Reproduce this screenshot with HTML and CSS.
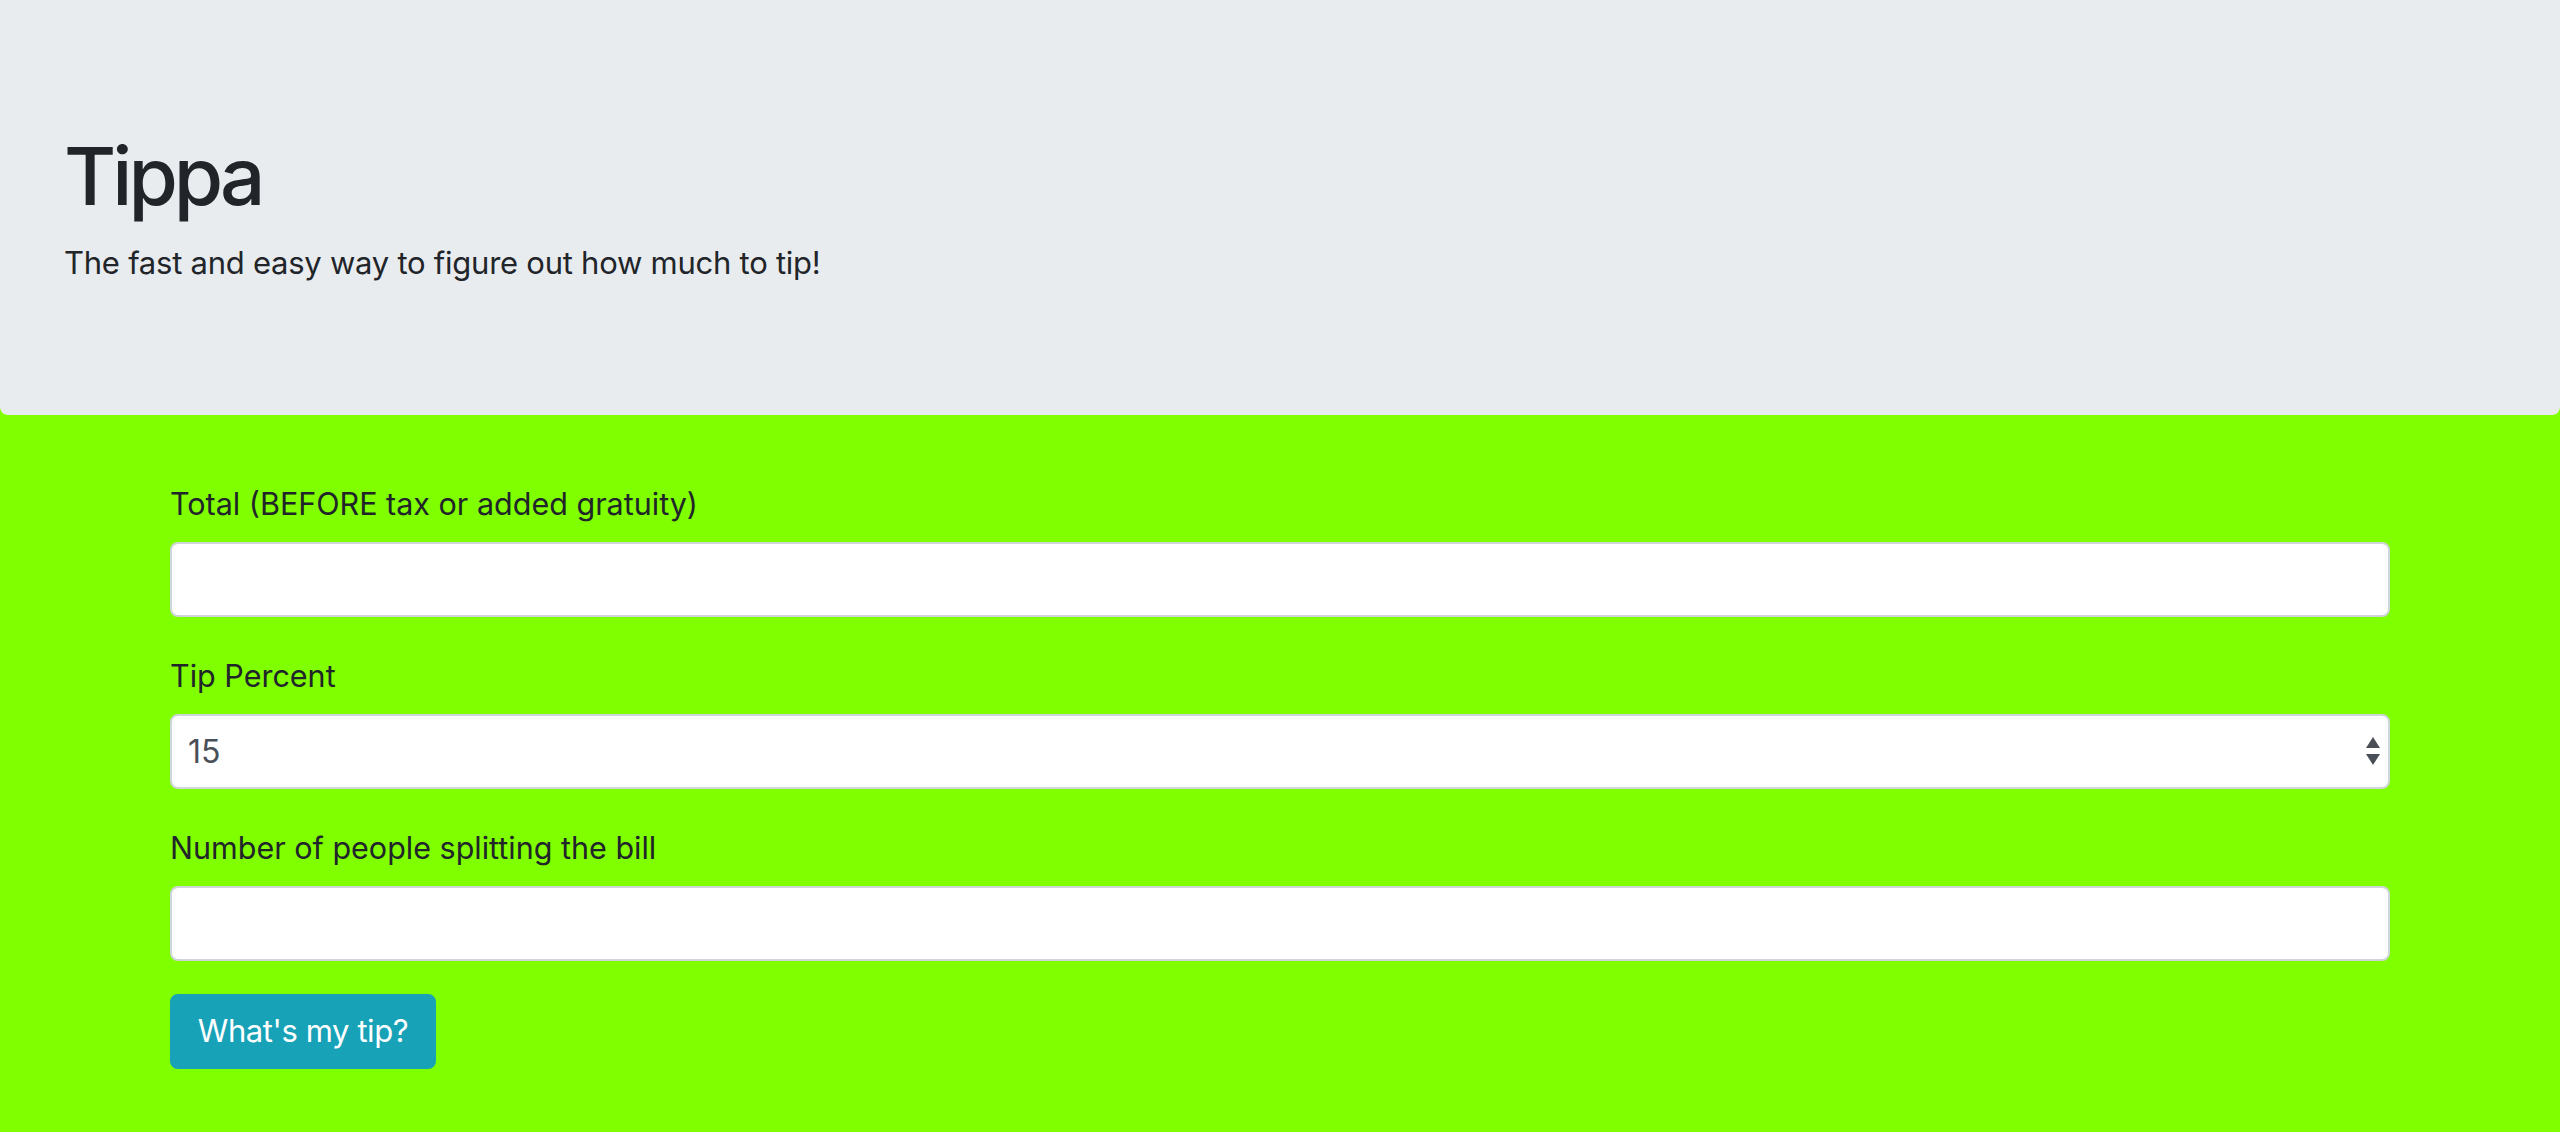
FILE: index.html
```html
<!DOCTYPE html>
<html lang="en">
<head>
<meta charset="utf-8">
<title>Tippa</title>
<link rel="stylesheet" href="styles.css">
</head>
<body>
<header class="jumbotron">
  <h1 class="title">Tippa</h1>
  <p class="lead">The fast and easy way to figure out how much to tip!</p>
</header>
<main class="container">
  <form class="tip-form">
    <div class="form-group">
      <label class="label" for="total">Total (BEFORE tax or added gratuity)</label>
      <input class="control" id="total" type="text">
    </div>
    <div class="form-group">
      <label class="label" for="percent">Tip Percent</label>
      <div class="select-wrap">
        <select class="control select" id="percent">
          <option>15</option>
          <option>18</option>
          <option>20</option>
          <option>25</option>
        </select>
        <svg class="select-arrows" width="14" height="29" viewBox="0 0 14 29" aria-hidden="true">
          <polygon points="7,0 14,11 0,11" fill="#4a4f57"/>
          <polygon points="0,17 14,17 7,28" fill="#4a4f57"/>
        </svg>
      </div>
    </div>
    <div class="form-group last">
      <label class="label" for="people">Number of people splitting the bill</label>
      <input class="control" id="people" type="text">
    </div>
    <button class="btn" type="button">What's my tip?</button>
  </form>
</main>
</body>
</html>
```
FILE: styles.css
```css
* { box-sizing: border-box; }

html, body {
  margin: 0;
  padding: 0;
}

body {
  background: #7fff00;
  font-family: Inter, "Liberation Sans", sans-serif;
  color: #212529;
}

.jumbotron {
  background: #e9ecef;
  padding: 128px 64px 128px;
  border-radius: 0 0 8px 8px;
  margin: 0 0 66px;
}

.title {
  margin: 0 0 16px;
  font-size: 80px;
  font-weight: 500;
  line-height: 1.2;
  letter-spacing: -4px;
}

.lead {
  margin: 0;
  font-size: 31px;
  line-height: 1.5;
  font-weight: 400;
  letter-spacing: -0.25px;
}

.container {
  width: 2280px;
  margin: 0 auto;
  padding: 0 30px;
}

.tip-form {
  display: flex;
  flex-direction: column;
  align-items: flex-start;
}

.form-group {
  display: flex;
  flex-direction: column;
  width: 100%;
  margin-bottom: 36px;
}

.form-group.last {
  margin-bottom: 33px;
}

.label {
  font-size: 30.5px;
  line-height: 45px;
  margin-bottom: 16px;
}

.control {
  display: block;
  width: 100%;
  height: 75px;
  border: 2px solid #ced4da;
  border-radius: 8px;
  background: #fff;
  padding: 0 24px;
  font-family: Inter, "Liberation Sans", sans-serif;
  font-size: 32px;
  color: #495057;
  outline: none;
}

.select-wrap {
  position: relative;
  width: 100%;
}

.select {
  -webkit-appearance: none;
  appearance: none;
  padding-left: 16px;
}

.select-arrows {
  position: absolute;
  right: 10px;
  top: 23px;
  pointer-events: none;
}

.btn {
  height: 75px;
  width: 266px;
  padding: 0;
  border: 2px solid #17a2b8;
  border-radius: 8px;
  background: #17a2b8;
  color: #fff;
  font-family: Inter, "Liberation Sans", sans-serif;
  font-size: 31px;
  letter-spacing: -0.4px;
  line-height: 1.5;
  white-space: nowrap;
  text-align: center;
  cursor: pointer;
}
```
